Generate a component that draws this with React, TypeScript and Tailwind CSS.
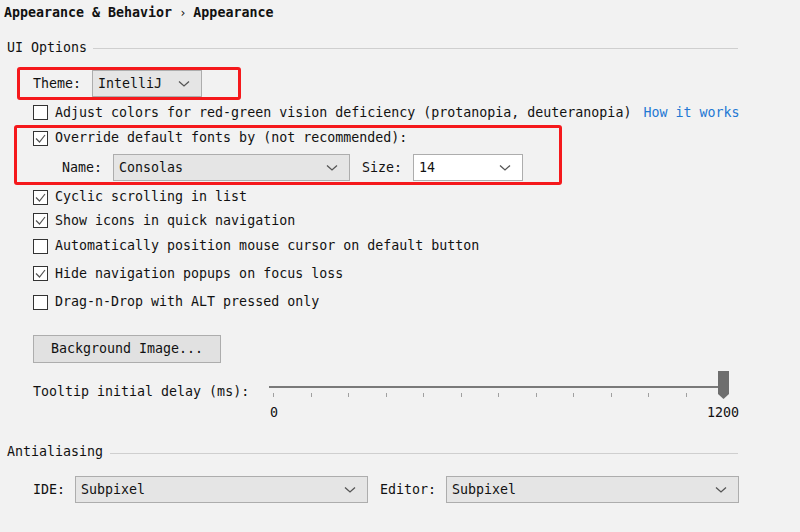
import React from "react";

const Chevron = () => (
  <svg width="12" height="8" viewBox="0 0 12 8" className="shrink-0">
    <polyline points="1,1.5 6,6 11,1.5" fill="none" stroke="#555" strokeWidth="1.3" />
  </svg>
);

function Combo({ value, width, white }: { value: string; width: string; white?: boolean }) {
  return (
    <div
      className={`${width} h-[27px] flex items-center justify-between pl-[5px] pr-[11px] border border-[#adadad] ${
        white ? "bg-white" : "bg-[#e5e5e5]"
      }`}
    >
      <span>{value}</span>
      <Chevron />
    </div>
  );
}

function Check({ checked }: { checked?: boolean }) {
  return (
    <div className="w-[15px] h-[15px] border border-[#333] bg-white flex items-center justify-center shrink-0">
      {checked && (
        <svg width="13" height="13" viewBox="0 0 13 13">
          <polyline points="2,6.5 5.5,10 11,3" fill="none" stroke="#555" strokeWidth="1.2" />
        </svg>
      )}
    </div>
  );
}

function CheckRow({ checked, label, h }: { checked?: boolean; label: string; h: string }) {
  return (
    <div className={`${h} flex items-center pl-[33px] gap-[7px]`}>
      <Check checked={checked} />
      <span>{label}</span>
    </div>
  );
}

export default function App() {
  const ticks = Array.from({ length: 12 }, (_, i) => 4 + i * 37.5);
  return (
    <div
      className="w-[800px] h-[532px] bg-[#f2f2f2] text-[#111] overflow-hidden text-[13.3px] leading-[16px]"
      style={{ fontFamily: '"DejaVu Sans Mono", "Liberation Mono", monospace' }}
    >
      <div className="h-[25px] flex items-center pl-[4px] font-bold">
        <span>Appearance &amp; Behavior</span>
        <span className="mx-[7px] font-normal text-[12px]">›</span>
        <span>Appearance</span>
      </div>

      <div className="mt-[12px] h-[21px] flex items-center pl-[7px] pr-[62px]">
        <span>UI Options</span>
        <div className="flex-1 h-px bg-[#cfcfcf] ml-[6px] mt-[2px]" />
      </div>

      <div className="mt-[9px] ml-[17px] w-[224px] h-[33px] border-[3px] border-[#f5191c] rounded-[3px] flex items-center pl-[13px]">
        <span>Theme:</span>
        <div className="ml-[11px]">
          <Combo value="IntelliJ" width="w-[110px]" />
        </div>
      </div>

      <div className="h-[25px] flex items-center pl-[33px] gap-[7px]">
        <Check />
        <span>Adjust colors for red-green vision deficiency (protanopia, deuteranopia)</span>
        <span className="ml-[5px] text-[#2378d4]">How it works</span>
      </div>

      <div className="ml-[14px] w-[548px] h-[60px] border-[3px] border-[#f5191c] rounded-[3px]">
        <div className="h-[20px] flex items-center pl-[16px] gap-[7px]">
          <Check checked />
          <span>Override default fonts by (not recommended):</span>
        </div>
        <div className="mt-[6px] flex items-center pl-[45px]">
          <span>Name:</span>
          <div className="ml-[11px]">
            <Combo value="Consolas" width="w-[237px]" />
          </div>
          <span className="ml-[12px]">Size:</span>
          <div className="ml-[11px]">
            <Combo value="14" width="w-[110px]" white />
          </div>
        </div>
      </div>

      <CheckRow checked label="Cyclic scrolling in list" h="h-[24px]" />
      <CheckRow checked label="Show icons in quick navigation" h="h-[23px]" />
      <CheckRow label="Automatically position mouse cursor on default button" h="h-[28px]" />
      <CheckRow checked label="Hide navigation popups on focus loss" h="h-[27px]" />
      <CheckRow label="Drag-n-Drop with ALT pressed only" h="h-[30px]" />

      <div className="mt-[18px] ml-[33px] w-[188px] h-[28px] border border-[#adadad] bg-[#e1e1e1] flex items-center pl-[17px]">
        Background Image...
      </div>

      <div className="mt-[8px] h-[50px] flex items-start pl-[33px]">
        <div className="w-[236px] mt-[13px]">Tooltip initial delay (ms):</div>
        <div className="relative w-[470px] h-[50px]">
          <div className="absolute left-0 top-[15px] w-[453px] h-[2px] bg-[#7a7a7a]" />
          {ticks.map((x) => (
            <div key={x} className="absolute top-[22px] w-px h-[4px] bg-[#a0a0a0]" style={{ left: `${x}px` }} />
          ))}
          <svg className="absolute left-[449px] top-0" width="11" height="28" viewBox="0 0 11 28">
            <polygon points="0,0 11,0 11,23 5.5,28 0,23" fill="#6e6e6e" />
          </svg>
          <span className="absolute left-[1px] top-[34px]">0</span>
          <span className="absolute left-[438px] top-[34px]">1200</span>
        </div>
      </div>

      <div className="mt-[21px] h-[20px] flex items-center pl-[7px] pr-[62px]">
        <span>Antialiasing</span>
        <div className="flex-1 h-px bg-[#cfcfcf] ml-[7px] mt-[2px]" />
      </div>

      <div className="mt-[14px] flex items-center pl-[33px]">
        <span>IDE:</span>
        <div className="ml-[10px]">
          <Combo value="Subpixel" width="w-[293px]" />
        </div>
        <span className="ml-[12px]">Editor:</span>
        <div className="ml-[10px]">
          <Combo value="Subpixel" width="w-[293px]" />
        </div>
      </div>
    </div>
  );
}
